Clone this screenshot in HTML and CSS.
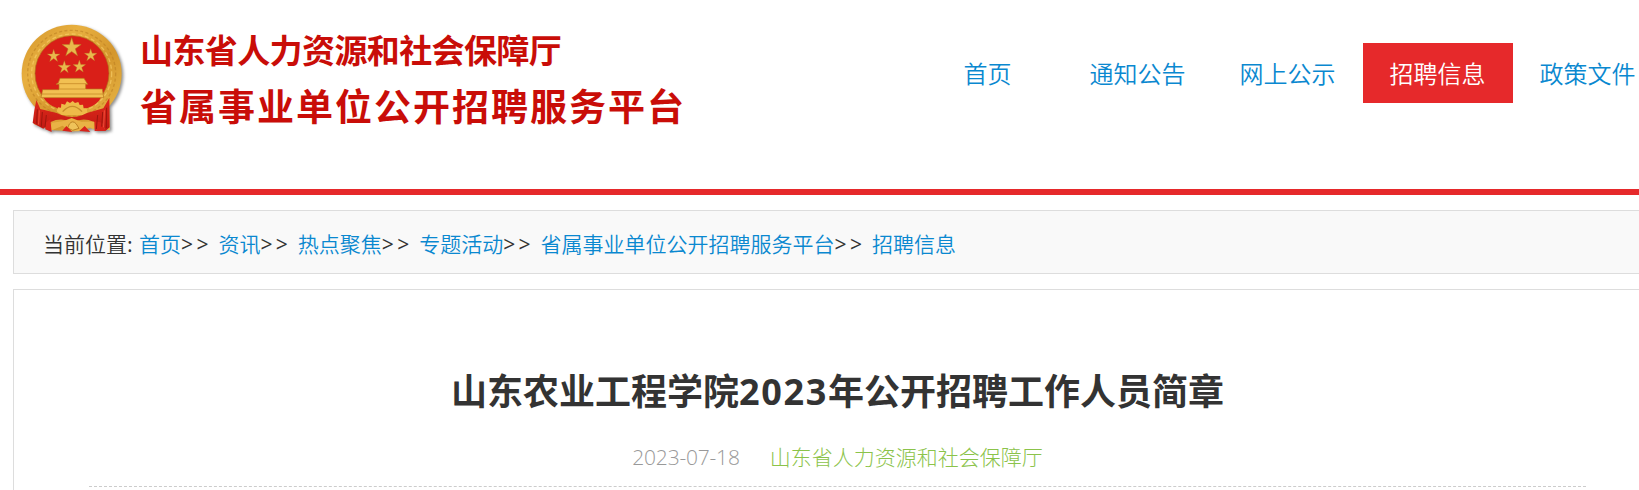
FILE: index.html
```
<!DOCTYPE html>
<html lang="zh-CN">

<head>
    <meta charset="UTF-8">
    <meta name="viewport" content="width=device-width, initial-scale=1.0">
    <title>山东农业工程学院2023年公开招聘工作人员简章</title>
    <link rel="stylesheet" href="styles.css">
</head>

<body>
    <div class="header">
        <div class="logo">
            <svg class="emblem" viewBox="0 0 375 390">
                <defs>
                    <linearGradient id="gold" x1="0" y1="0" x2="1" y2="1">
                        <stop offset="0" stop-color="#d2932a"/>
                        <stop offset=".3" stop-color="#e8b040"/>
                        <stop offset=".6" stop-color="#d4962c"/>
                        <stop offset="1" stop-color="#ebbb4a"/>
                    </linearGradient>
                    <linearGradient id="cloth" x1="0" y1="0" x2="0" y2="1">
                        <stop offset="0" stop-color="#e02a1c"/>
                        <stop offset="1" stop-color="#c01812"/>
                    </linearGradient>
                    <polygon id="star" points="0,-100 22,-31 95,-31 36,12 59,81 0,38 -59,81 -36,12 -95,-31 -22,-31"/>
                </defs>
                <g class="emblem-body">
                    <ellipse cx="185" cy="176" rx="150" ry="147" fill="url(#gold)"/>
                    <path d="M78 262 Q120 320 185 300 Q250 320 297 262 L300 345 L240 340 L190 349 L130 346 L72 328Z" fill="url(#gold)"/>
                    <ellipse cx="185" cy="175" rx="132" ry="129" fill="none" stroke="#b87a20" stroke-width="4" stroke-dasharray="9 7" opacity=".5"/>
                    <ellipse cx="185" cy="175" rx="120" ry="118" fill="none" stroke="#ffdc78" stroke-width="4" stroke-dasharray="12 8" opacity=".5"/>
                    <ellipse cx="186" cy="175" rx="111" ry="113" fill="#d91f18" stroke="#b0701c" stroke-width="2"/>
                    <path d="M100 246H274Q262 270 230 280L216 264H158L144 280Q112 270 100 246Z" fill="#d91f18"/>
                    <g fill="#e9b84c" stroke="#b87a25" stroke-width="5">
                        <use href="#star" transform="translate(185 98) scale(.3)"/>
                        <use href="#star" transform="translate(131 123) scale(.2)"/>
                        <use href="#star" transform="translate(242 121) scale(.2)"/>
                        <use href="#star" transform="translate(163 157) scale(.2)"/>
                        <use href="#star" transform="translate(208 155) scale(.2)"/>
                    </g>
                    <path d="M150 190H222L233 208H227V222H277L281 248H93L98 224H147V208H138L145 203Z" fill="#f2c052" stroke="#b8751c" stroke-width="2"/>
                    <path d="M145 206H229M148 222H226M96 237H279" fill="none" stroke="#c0811f" stroke-width="2"/>
                    <!-- gear -->
                    <path d="M141 290L144 277L153 278L154 266L165 269L171 259L180 264L188 258L195 264L205 261L209 270L219 269L221 280L230 280L232 294L218 300H156Z" fill="#eebb49"/>
                    <path d="M158 290Q187 258 216 290" fill="none" stroke="#c98e2b" stroke-width="4"/>
                    <!-- ribbons -->
                    <path d="M79 255L91 282L140 294Q188 318 231 294L280 280L298 248L299 337L287 347L276 325L250 320Q220 306 188 322Q153 306 122 321L100 341L68 324L73 286Z" fill="url(#cloth)"/>
                    <path d="M118 349L126 323L161 318L185 309L214 320L252 320L251 344L239 335L205 349H178L158 332Z" fill="#e9b245"/>
                    <path d="M178 327Q188 314 199 327L207 340L188 346L173 339Z" fill="#efc35a" stroke="#bd8022" stroke-width="3"/>
                    <path d="M105 325L121 312L125 351L106 343ZM157 347L169 333L187 351ZM208 348L224 333L241 351ZM253 317L276 323L288 348H254Z" fill="#d8231a"/>
                    <path d="M82 283L80 326M97 291L94 335M109 300L105 337M278 291L275 335M290 278L289 339M263 300L259 342" fill="none" stroke="#9d160d" stroke-width="3"/>
                    <path d="M88 286L86 329M283 286L281 337" fill="none" stroke="#f1513a" stroke-width="3"/>
                </g>
            </svg>
            <div class="logo-text">
                <div class="dept">山东省人力资源和社会保障厅</div>
                <div class="platform">省属事业单位公开招聘服务平台</div>
            </div>
        </div>
        <div class="nav">
            <a href="#">首页</a>
            <a href="#">通知公告</a>
            <a href="#">网上公示</a>
            <a href="#" class="active">招聘信息</a>
            <a href="#">政策文件</a>
        </div>
    </div>

    <div class="main">
        <div class="position">
            <span class="label">当前位置:</span>
            <a href="#">首页</a><span class="sep">&gt;&gt;</span>
            <a href="#">资讯</a><span class="sep">&gt;&gt;</span>
            <a href="#">热点聚焦</a><span class="sep">&gt;&gt;</span>
            <a href="#">专题活动</a><span class="sep">&gt;&gt;</span>
            <a href="#">省属事业单位公开招聘服务平台</a><span class="sep">&gt;&gt;</span>
            <a href="#">招聘信息</a>
        </div>

        <div class="article">
            <h1>山东农业工程学院<span class="year">2023</span>年公开招聘工作人员简章</h1>
            <div class="info">
                <span class="date">2023-07-18</span>
                <span class="source">山东省人力资源和社会保障厅</span>
            </div>
        </div>
    </div>
</body>
</html>
```
FILE: styles.css
```
body{
    margin: 0;
    background-color: #fff;
    color: #333;
    font-family: "Open Sans", "Noto Sans CJK SC", sans-serif;
    overflow: hidden;
}

a {
    color: #0a88d0;
    text-decoration: none;
}

.header {
    display: flex;
    justify-content: space-between;
    box-sizing: border-box;
    width: 1663px;
    height: 195px;
    border-bottom: 6px solid #e6292b;
}

.logo {
    display: flex;
    padding: 15px 0 0 10px;
}
.emblem {
    width: 125px;
    height: 130px;
}
.emblem-body {
    filter: drop-shadow(5px 5px 4px rgba(0, 0, 0, .45));
}
.logo-text {
    padding: 10px 0 0 5px;
    font-family: "Noto Sans CJK SC", sans-serif;
    font-weight: bold;
    color: #c90d08;
    white-space: nowrap;
}
.dept {
    font-size: 33px;
    line-height: 48px;
    letter-spacing: -0.6px;
}
.platform {
    margin-top: 7px;
    font-size: 37px;
    line-height: 50px;
    letter-spacing: 2px;
}

.nav {
    display: flex;
    width: 750px;
    padding-top: 43px;
}
.nav a {
    box-sizing: border-box;
    width: 150px;
    height: 60px;
    padding-right: 1px;
    font-size: 24px;
    line-height: 60px;
    text-align: center;
    font-family: "Noto Sans CJK SC", sans-serif;
    font-weight: 350;
}
.nav .active {
    background-color: #e6292b;
    color: #fff;
}

.main {
    width: 1649px;
    margin: 15px 0 0 13px;
}

.position {
    display: flex;
    box-sizing: border-box;
    height: 64px;
    padding-left: 29px;
    border: 1px solid #ddd;
    background-color: #f9f9f9;
    font-size: 21px;
    line-height: 64px;
    font-family: "Noto Sans CJK SC", sans-serif;
    font-weight: 350;
    white-space: nowrap;
}
.position .label {
    width: 96px;
}
.position .sep {
    width: 37.4px;
    font-family: "Open Sans", sans-serif;
    font-weight: 400;
    line-height: 66px;
    letter-spacing: 3.4px;
}

.article {
    height: 201px;
    margin-top: 15px;
    padding: 0 75px;
    border: 1px solid #ddd;
    border-bottom: 0;
    box-sizing: border-box;
}
.article h1 {
    margin: 0;
    padding-top: 72px;
    font-size: 36px;
    line-height: 60px;
    text-align: center;
}
.year {
    letter-spacing: 1.7px;
}

.info {
    display: flex;
    justify-content: center;
    gap: 30px;
    height: 64px;
    border-bottom: 1px dashed #ccc;
    font-size: 21px;
    line-height: 70px;
    font-weight: 300;
}
.date {
    color: #999;
    letter-spacing: -0.2px;
}
.source {
    color: #8bc34a;
}
```
